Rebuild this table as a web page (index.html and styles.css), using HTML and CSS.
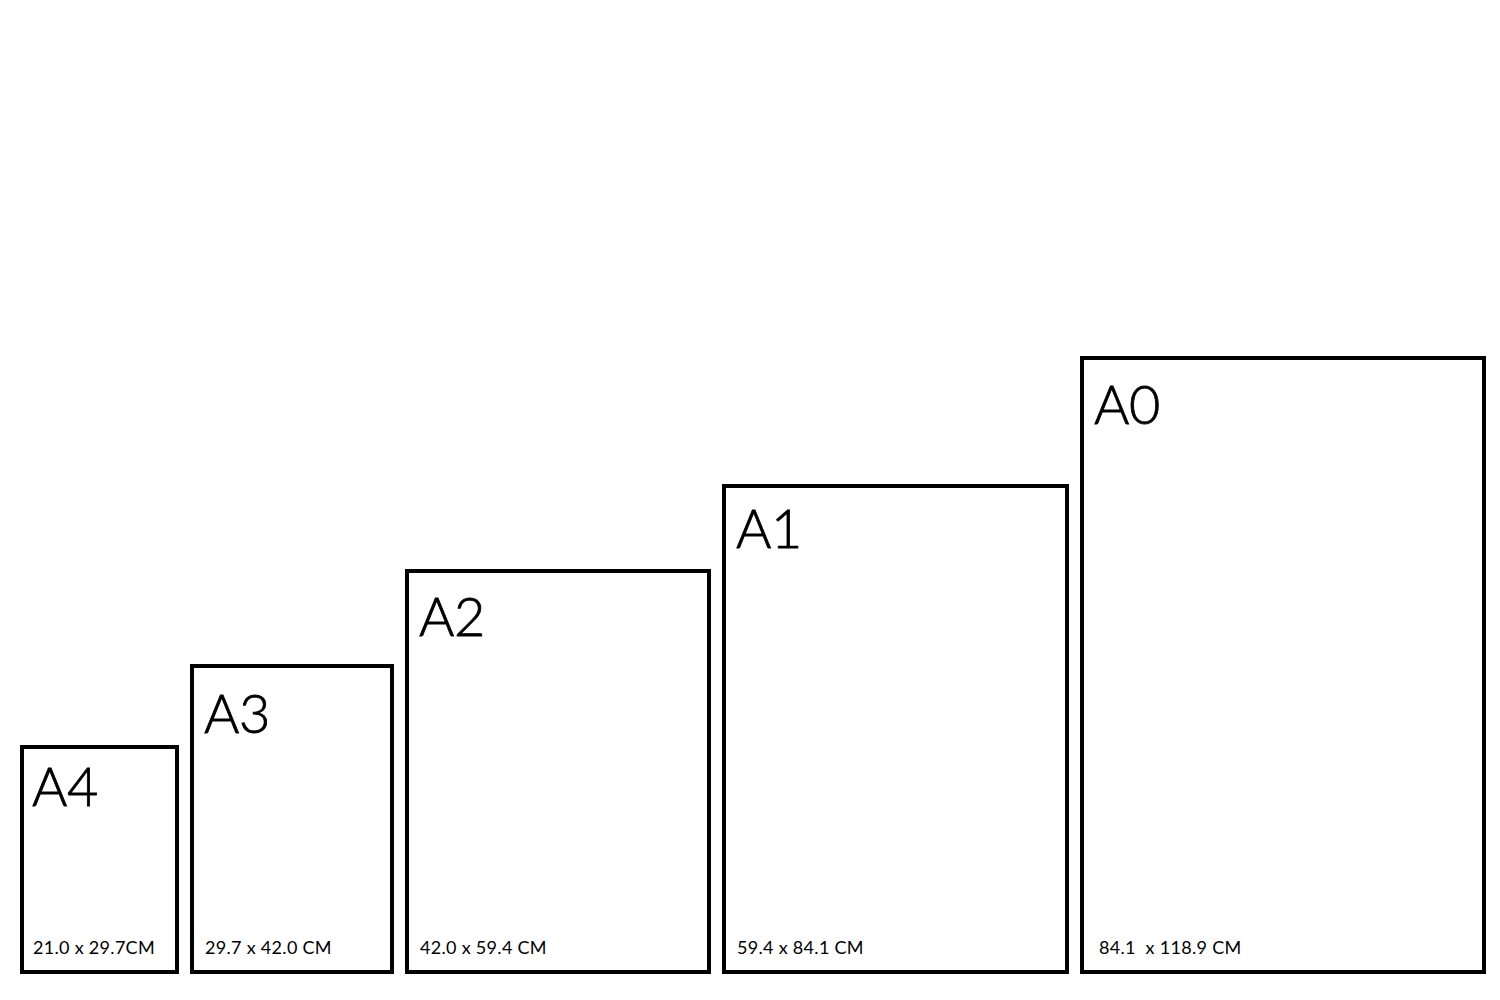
FILE: index.html
```html
<!DOCTYPE html>
<html>
<head>
<meta charset="utf-8">
<link rel="stylesheet" href="styles.css">
</head>
<body>
<div class="row">
  <div class="sheet a4"><div class="name">A4</div><div class="dims">21.0 x 29.7CM</div></div>
  <div class="sheet a3"><div class="name">A3</div><div class="dims">29.7 x 42.0 CM</div></div>
  <div class="sheet a2"><div class="name">A2</div><div class="dims">42.0 x 59.4 CM</div></div>
  <div class="sheet a1"><div class="name">A1</div><div class="dims">59.4 x 84.1 CM</div></div>
  <div class="sheet a0"><div class="name">A0</div><div class="dims">84.1&nbsp; x 118.9 CM</div></div>
</div>
</body>
</html>
```
FILE: styles.css
```css
html, body {
  margin: 0;
  padding: 0;
  background: #fff;
}
body {
  width: 1500px;
  height: 1000px;
  overflow: hidden;
  font-family: "Lato", "Liberation Sans", sans-serif;
  color: #000;
}
.row {
  height: 1000px;
  box-sizing: border-box;
  display: flex;
  align-items: flex-end;
  gap: 11px;
  padding: 0 0 26px 20px;
}
.sheet {
  box-sizing: border-box;
  border: 4px solid #000;
  display: flex;
  flex-direction: column;
  padding: 12px 12px 14px 10px;
}
.name {
  font-size: 54px;
  font-weight: 300;
  line-height: 1;
  letter-spacing: -0.5px;
  -webkit-text-stroke: 0.8px #000;
}
.dims {
  margin-top: auto;
  font-size: 18px;
  letter-spacing: 0.3px;
  line-height: 1;
  padding-left: 1px;
}
.a4 { width: 159px; height: 229px; padding-left: 8px; }
.a4 .name { margin-top: -2px; }
.a3 { width: 204px; height: 310px; }
.a3 .name { margin-top: 6px; }
.a2 { width: 306px; height: 405px; }
.a2 .name { margin-top: 4px; }
.a1 { width: 347px; height: 490px; }
.a1 .name { margin-top: 1px; }
.a0 { width: 406px; height: 618px; }
.a0 .name { margin-top: 5px; }
.a0 .dims { padding-left: 5px; }
```
